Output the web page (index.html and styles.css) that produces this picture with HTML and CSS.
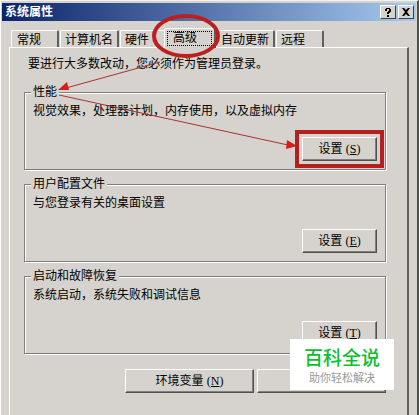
FILE: index.html
```html
<!DOCTYPE html>
<html lang="zh-CN">
<head>
    <meta charset="UTF-8">
    <meta name="viewport" content="width=device-width, initial-scale=1.0">
    <title>系统属性</title>
    <link rel="stylesheet" href="styles.css">
</head>
<body>
    <div class="window">
        <header class="title-bar">
            <h1>系统属性</h1>
            <button class="title-button" aria-label="帮助">
                <svg width="8" height="9" viewBox="0 0 8 9"><path d="M1 3V1H2V0H6V1H7V4H6V5H5V6H3V4H4V3H5V1H3V3ZM3 7H5V9H3Z"/></svg>
            </button>
            <button class="title-button" aria-label="关闭">
                <svg width="8" height="8" viewBox="0 0 8 8"><path d="M0 0H2L4 2L6 0H8L5 4L8 8H6L4 6L2 8H0L3 4Z"/></svg>
            </button>
        </header>

        <nav class="tabs" role="tablist">
            <button class="tab" role="tab">常规</button>
            <button class="tab" role="tab">计算机名</button>
            <button class="tab" role="tab">硬件</button>
            <button class="tab active" role="tab" aria-selected="true"><span>高级</span></button>
            <button class="tab" role="tab">自动更新</button>
            <button class="tab" role="tab">远程</button>
        </nav>

        <main class="pane">
            <p class="intro">要进行大多数改动，您必须作为管理员登录。</p>

            <fieldset class="group">
                <legend>性能</legend>
                <p>视觉效果，处理器计划，内存使用，以及虚拟内存</p>
                <div class="group-action marked">
                    <button class="button">设置 <span class="key">(<u>S</u>)</span></button>
                </div>
            </fieldset>

            <fieldset class="group">
                <legend>用户配置文件</legend>
                <p>与您登录有关的桌面设置</p>
                <div class="group-action">
                    <button class="button">设置 <span class="key">(<u>E</u>)</span></button>
                </div>
            </fieldset>

            <fieldset class="group">
                <legend>启动和故障恢复</legend>
                <p>系统启动，系统失败和调试信息</p>
                <div class="group-action">
                    <button class="button">设置 <span class="key">(<u>T</u>)</span></button>
                </div>
            </fieldset>

            <div class="footer">
                <button class="button wide">环境变量 <span class="key">(<u>N</u>)</span></button>
                <button class="button wide" aria-label="错误报告"></button>
            </div>
        </main>

        <!-- red marks over the dialog -->
        <svg class="marks" width="300" height="170" viewBox="0 0 300 170">
            <ellipse cx="186" cy="35" rx="32" ry="20"/>
            <path class="line" d="M160 61L66 87M59 94L288 144"/>
            <path class="head" d="M58 89L67 81L69 89ZM297 145L286 148L287 139Z"/>
        </svg>

        <div class="watermark">
            <strong>百科全说</strong>
            <span>助你轻松解决</span>
        </div>
    </div>
</body>
</html>
```

FILE: styles.css
```css
* {
    box-sizing: border-box;
}

body {
    margin: 0;
    background: #d6d3ce;
    color: #000;
    font: 12px/16px "Liberation Sans", "Noto Sans CJK SC", sans-serif;
}

h1, p {
    margin: 0;
    font-size: 12px;
}

button {
    margin: 0;
    padding: 0;
    color: inherit;
    font: inherit;
}

.window {
    position: relative;
    display: flex;
    flex-direction: column;
    min-height: 100vh;
    padding: 2px 1px 0 2px;
    border-top: 1px solid #f4f2ee;
    border-right: 2px solid #505050;
    box-shadow: inset 1px 0 #fff;
}

/* title bar */
.title-bar {
    display: flex;
    align-items: center;
    gap: 2px;
    height: 18px;
    padding: 0 2px 0 3px;
    background: linear-gradient(to right, #0a246a, #a6caf0);
    color: #fff;
}

.title-bar h1 {
    flex: 1;
}

.title-button {
    display: flex;
    align-items: center;
    justify-content: center;
    width: 16px;
    height: 14px;
    border: 1px solid;
    border-color: #fff #404040 #404040 #fff;
    background: #d6d3ce;
}

/* tabs */
.tabs {
    display: flex;
    align-items: flex-end;
    height: 26px;
    padding-left: 9px;
}

.tab {
    min-width: 48px;
    height: 17px;
    padding: 1px 4px 0;
    margin-right: 1px;
    border: 1px solid #fff;
    border-right: 2px solid #606060;
    border-bottom: 0;
    border-radius: 2px 2px 0 0;
    background: #d6d3ce;
    text-align: left;
    line-height: 16px;
}

.tab:first-child {
    padding-left: 5px;
}

.tab.active {
    z-index: 1;
    width: 52px;
    height: 20px;
    margin: 0 0 -1px -5px;
    padding: 2px;
}

.tab.active span {
    display: block;
    border: 1px dotted #000;
    padding-left: 5px;
    line-height: 13px;
}

/* page */
.pane {
    flex: 1;
    margin: 0 7px;
    padding: 8px 21px 0 14px;
    border: 1px solid #fff;
    border-right: 2px solid #606060;
    border-bottom: 0;
}

.intro {
    padding-left: 4px;
    margin-bottom: 12px;
}

.group {
    min-width: 0;
    margin: 0 0 6px;
    padding: 3px 8px 8px;
    border: 1px solid #808080;
    box-shadow: 1px 1px #fff, inset 1px 1px #fff;
}

.group legend {
    padding: 0 2px;
    margin-left: -2px;
    background: #d6d3ce;
}

.group-action {
    display: flex;
    justify-content: flex-end;
    margin-top: 18px;
}

.button {
    width: 75px;
    height: 24px;
    border: 1px solid;
    border-color: #fff #505050 #505050 #fff;
    background: #d6d3ce;
    box-shadow: inset -1px -1px #808080;
}

.key {
    font-family: "Liberation Serif", serif;
}

.marked .button {
    outline: 4px solid #b5201f;
    outline-offset: 3px;
}

.footer {
    display: flex;
    justify-content: flex-end;
    gap: 3px;
    margin-top: 15px;
}

.button.wide {
    width: 129px;
}

/* overlays */
.marks {
    position: absolute;
    top: 0;
    left: 0;
    z-index: 2;
    pointer-events: none;
    fill: none;
    stroke: #bd1f20;
    stroke-width: 4;
}

.marks .line {
    stroke: #a83234;
    stroke-width: 1;
}

.marks .head {
    fill: #d81b1b;
    stroke: none;
}

.watermark {
    position: absolute;
    right: 23px;
    bottom: 25px;
    z-index: 3;
    display: flex;
    flex-direction: column;
    align-items: center;
    padding: 8px 14px 4px;
    background: #fff;
    color: #999;
    font-size: 11px;
}

.watermark strong {
    color: #0cc02f;
    font-size: 19px;
    font-weight: 500;
    line-height: 23px;
}
```
